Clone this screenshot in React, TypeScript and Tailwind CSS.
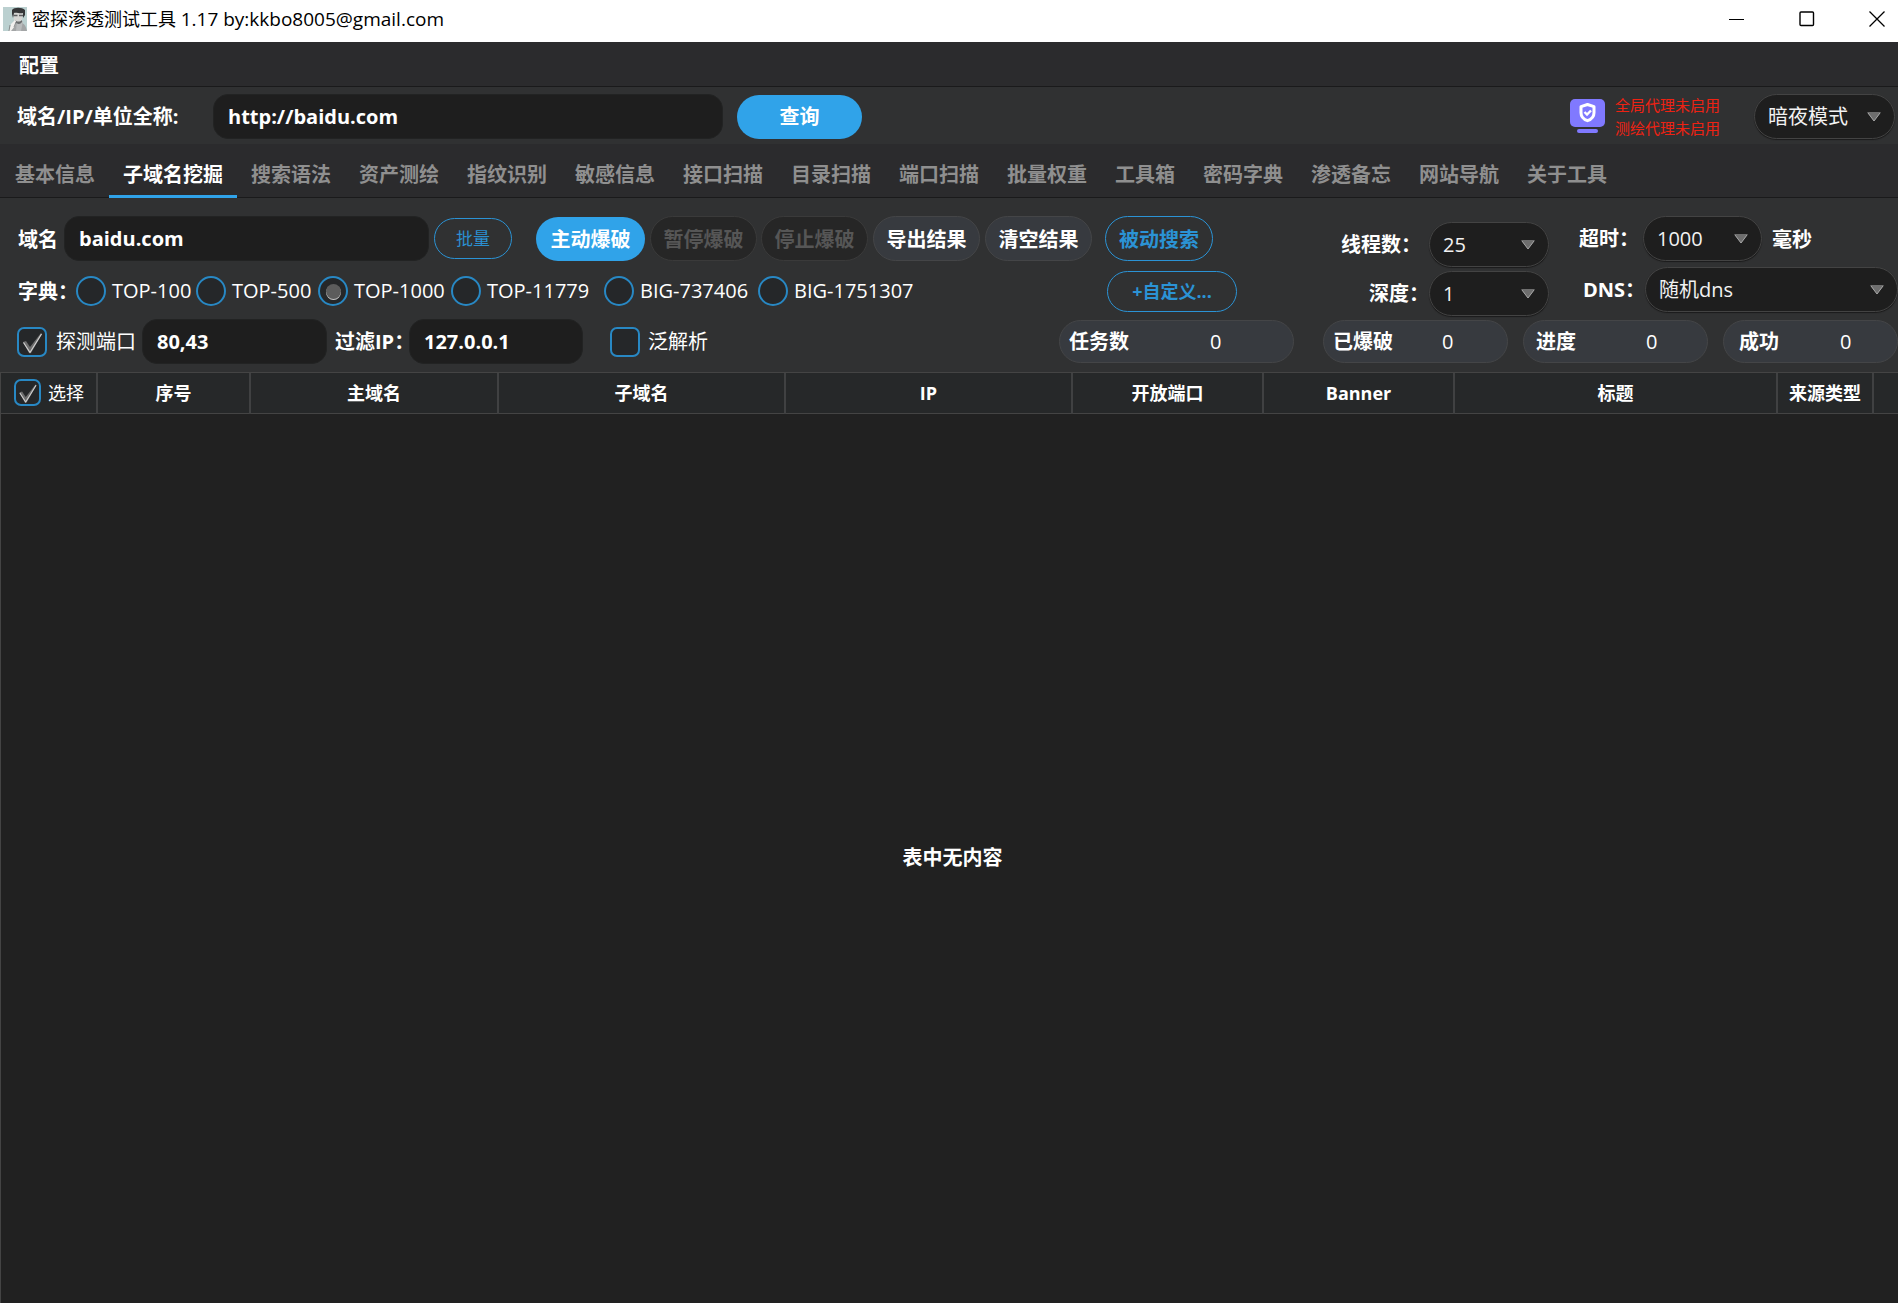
import React, { useState } from "react";

const TABS = [
  "基本信息", "子域名挖掘", "搜索语法", "资产测绘", "指纹识别", "敏感信息", "接口扫描", "目录扫描",
  "端口扫描", "批量权重", "工具箱", "密码字典", "渗透备忘", "网站导航", "关于工具",
];

const COLUMNS = [
  { name: "序号", width: "w-[153px]" },
  { name: "主域名", width: "w-[248px]" },
  { name: "子域名", width: "w-[287px]" },
  { name: "IP", width: "w-[287px]" },
  { name: "开放端口", width: "w-[191px]" },
  { name: "Banner", width: "w-[191px]" },
  { name: "标题", width: "" },
  { name: "来源类型", width: "w-[96px]" },
];

const DICTIONARIES = [
  { name: "TOP-100", width: "w-[120px]" },
  { name: "TOP-500", width: "w-[122px]" },
  { name: "TOP-1000", width: "w-[133px]" },
  { name: "TOP-11779", width: "w-[153px]" },
  { name: "BIG-737406", width: "w-[154px]" },
  { name: "BIG-1751307", width: "w-[166px]" },
];

const STATS = [
  { name: "任务数", width: "w-[235px]", margin: "mr-[29px]", pad: "pl-[9px]", gap: "ml-[81px]" },
  { name: "已爆破", width: "w-[185px]", margin: "mr-[15px]", pad: "pl-[9px]", gap: "ml-[49px]" },
  { name: "进度", width: "w-[185px]", margin: "mr-[15px]", pad: "pl-[12px]", gap: "ml-[70px]" },
  { name: "成功", width: "w-[175px]", margin: "", pad: "pl-[15px]", gap: "ml-[61px]" },
];

function Avatar() {
  return (
    <svg width="24" height="24" viewBox="0 0 24 24" aria-hidden="true">
      <rect width="24" height="24" fill="#bbd0d0" />
      <path d="M8 24c0-4 2-8 5-9h4c4 1 6 4 7 9z" fill="#a3a5a6" />
      <path d="M14 14l-1 10h5l2-10z" fill="#b9bbbc" />
      <path d="M10 5h10l-1 8c-1 3-6 4-8 0z" fill="#d5d5d3" />
      <path d="M9 7V3c2-3 10-3 13 0v5l-2 3V6c-3 1-7-1-9 0l-1 5z" fill="#353638" />
      <path d="M10.500 8.500h4M16 8.500h4" stroke="#5c5d5f" strokeWidth="1.500" />
      <path d="M12 13c2 2 5 2 7 0v2c-2 3-5 2-7 0z" fill="#686a6b" />
      <path d="M6 24l2-7 4-4 1 1-1 5-4 5z" fill="#f3f1ef" />
      <path d="M7 18l-1 6M13 15l-2 5" stroke="#77797a" strokeWidth="0.800" />
    </svg>
  );
}

function ProxyIcon() {
  return (
    <svg width="35" height="35" viewBox="0 0 35 35" aria-hidden="true">
      <rect width="35" height="28" rx="5" fill="#8079ff" />
      <rect x="7" y="30" width="21" height="4" rx="2" fill="#8079ff" />
      <path d="M17.500 5.500l6.500 2.200v6c0 4-2.500 6.500-6.500 8-4-1.500-6.500-4-6.500-8v-6z" fill="none" stroke="#fff" strokeWidth="3" strokeLinejoin="round" />
      <path d="M14.500 13l2.500 2.500 4-4" fill="none" stroke="#fff" strokeWidth="2.400" />
    </svg>
  );
}

function Arrow({ className }: { className: string }) {
  return (
    <svg className={"pointer-events-none absolute top-1/2 -translate-y-1/2 " + className} width="14" height="10" viewBox="0 0 14 10" aria-hidden="true">
      <path d="M0 0h14L7 9z" fill="#6e6e6e" />
      <path d="M1 1l6 8 6-8" fill="none" stroke="#a8a8a8" />
    </svg>
  );
}

function Select({ id, label, value, width }: { id: string; label?: string; value: string; width: string }) {
  return (
    <div className={"relative h-[45px] shrink-0 font-normal " + width}>
      <select
        id={id}
        aria-label={label}
        defaultValue={value}
        className="h-full w-full appearance-none rounded-full border border-[#434343] bg-[#1e1e1e] pl-[13px] text-[20px] text-[#f2f2f2] shadow-[0_1px_1px_#1b1b1b]"
      >
        <option>{value}</option>
      </select>
      <Arrow className="right-[14px]" />
    </div>
  );
}

function Check({ id, size, checked }: { id: string; size: string; checked?: boolean }) {
  return (
    <span className={"relative block shrink-0 " + size}>
      <input
        id={id}
        type="checkbox"
        defaultChecked={checked}
        className="peer block h-full w-full appearance-none rounded-[7px] border-2 border-[#2888c4] bg-[#252729]"
      />
      <svg className="pointer-events-none absolute inset-0 hidden h-full w-full peer-checked:block" viewBox="0 0 30 30" aria-hidden="true">
        <path d="M6 15l3-1 4 6L24 6l1 1-11 19h-2z" fill="#6d6d6d" />
        <path d="M6.500 15.500L13 25.500 24.500 7" fill="none" stroke="#d0d0d0" strokeWidth="1.200" />
      </svg>
    </span>
  );
}

const pill = "h-[45px] shrink-0 rounded-full border pt-[2px] text-[20px] font-bold";
const field = "h-[45px] shrink-0 rounded-[15px] border border-[#222323] bg-[#1e1e1e] px-[14px] text-[20px] font-bold text-white outline-none";

export default function App() {
  const [tab, setTab] = useState("子域名挖掘");
  return (
    <div className="flex min-h-screen flex-col overflow-hidden whitespace-nowrap bg-[#303132] font-['Open_Sans','Noto_Sans_CJK_SC',sans-serif] text-[20px] leading-[28px] text-white">
      <header className="flex h-[42px] items-center bg-white pb-[4px] pl-[3px] pr-[13px] text-[18px] text-black">
        <Avatar />
        <h1 className="ml-[5px]">密探渗透测试工具 <span className="text-[19px]">1.17 by:kkbo8005@gmail.com</span></h1>
        <div className="ml-auto flex items-center gap-[54px]">
          <button aria-label="最小化">
            <svg width="16" height="16" viewBox="0 0 16 16"><path d="M0 8.500h15" stroke="#000" /></svg>
          </button>
          <button aria-label="最大化">
            <svg width="16" height="16" viewBox="0 0 16 16"><rect x="1" y="1" width="13.500" height="13.500" rx="1" fill="none" stroke="#000" strokeWidth="1.400" /></svg>
          </button>
          <button aria-label="关闭">
            <svg width="16" height="16" viewBox="0 0 16 16"><path d="M.5.5l15 15M15.500.5l-15 15" stroke="#000" strokeWidth="1.300" /></svg>
          </button>
        </div>
      </header>

      <nav className="flex h-[45px] items-center border-b border-[#1a1a1b] bg-[#2b2b2d] pl-[19px] pt-[4px]">
        <button className="font-bold">配置</button>
      </nav>

      <section className="flex h-[57px] items-center pl-[17px] pr-[3px] pt-[2px]">
        <label htmlFor="target" className="w-[196px] font-bold">域名/IP/单位全称:</label>
        <input id="target" defaultValue="http://baidu.com" className={field + " w-[510px]"} />
        <button className="ml-[14px] h-[44px] w-[125px] rounded-full bg-[#30a3e9] font-bold">查询</button>
        <div className="ml-auto flex items-center">
          <ProxyIcon />
          <div className="ml-[10px] text-[15px] leading-[23px] text-[#ee2213]">
            <p>全局代理未启用</p>
            <p>测绘代理未启用</p>
          </div>
          <div className="ml-[34px]">
            <Select id="theme" label="主题" value="暗夜模式" width="w-[141px]" />
          </div>
        </div>
      </section>

      <div role="tablist" className="flex h-[54px] border-b border-[#1a1a1b] bg-[#2b2b2d] pl-px">
        {TABS.map((name) => (
          <button
            key={name}
            role="tab"
            aria-selected={name === tab}
            onClick={() => setTab(name)}
            className="-mb-px border-b-[3px] border-transparent px-[14px] pt-[11px] font-bold text-[#8f8f8f] aria-selected:border-[#30a3e9] aria-selected:text-white"
          >
            {name}
          </button>
        ))}
      </div>

      <main className="flex flex-1 flex-col">
        <div className="flex items-start pt-[18px]">
          <div className="flex flex-col gap-[9px] pl-[18px]">
            <div className="flex items-center">
              <label htmlFor="domain" className="w-[46px] pt-[2px] font-bold">域名</label>
              <input id="domain" defaultValue="baidu.com" className={field + " w-[365px]"} />
              <button className="ml-[5px] h-[41px] w-[78px] rounded-full border border-[#2b93d5] text-[17px] text-[#2b8fd0]">批量</button>
              <button className="ml-[24px] h-[44px] w-[109px] rounded-full bg-[#30a3e9] pt-[2px] font-bold">主动爆破</button>
              <button disabled className={pill + " ml-[5px] w-[107px] border-[#3a3a3a] bg-[#262626] text-[#565656]"}>暂停爆破</button>
              <button disabled className={pill + " ml-[4px] w-[107px] border-[#3a3a3a] bg-[#262626] text-[#565656]"}>停止爆破</button>
              <button className={pill + " ml-[5px] w-[107px] border-[#444547] bg-[#373a3f]"}>导出结果</button>
              <button className={pill + " ml-[5px] w-[107px] border-[#444547] bg-[#373a3f]"}>清空结果</button>
              <button className={pill + " ml-[13px] w-[108px] border-[#2b93d5] text-[#2b93d5]"}>被动搜索</button>
            </div>
            <div className="flex h-[42px] items-center">
              <span id="dict" className="w-[58px] pt-[2px] font-bold">字典：</span>
              <div role="radiogroup" aria-labelledby="dict" className="flex">
                {DICTIONARIES.map((d) => (
                  <label key={d.name} className={"flex items-center gap-[6px] text-[20px] " + d.width}>
                    <input
                      type="radio"
                      name="dict"
                      defaultChecked={d.name === "TOP-1000"}
                      className="grid size-[30px] shrink-0 appearance-none place-items-center rounded-full border-2 border-[#2888c4] bg-[#252729] checked:before:size-[15px] checked:before:rounded-full checked:before:bg-[#5c5c5c] checked:before:shadow-[0_1px_0_#c8c8c8] checked:before:content-['']"
                    />
                    {d.name}
                  </label>
                ))}
              </div>
              <button className="ml-auto mr-[-24px] h-[41px] w-[130px] rounded-full border border-[#2b93d5] text-[18px] font-bold text-[#2b93d5]">+自定义...</button>
            </div>
          </div>

          <div className="ml-auto flex font-bold">
            <div className="flex flex-col gap-[4px] pt-[6px]">
              <div className="flex items-center justify-end">
                <label htmlFor="threads" className="w-[88px]">线程数：</label>
                <Select id="threads" value="25" width="w-[120px]" />
              </div>
              <div className="flex items-center justify-end">
                <label htmlFor="depth" className="w-[60px]">深度：</label>
                <Select id="depth" value="1" width="w-[120px]" />
              </div>
            </div>
            <div className="ml-[30px] flex flex-col gap-[6px]">
              <div className="flex items-center">
                <label htmlFor="timeout" className="w-[64px]">超时：</label>
                <Select id="timeout" value="1000" width="w-[119px]" />
                <span className="ml-[10px] pt-[2px]">毫秒</span>
              </div>
              <div className="flex items-center pl-[4px]">
                <label htmlFor="dns" className="w-[62px]">DNS：</label>
                <Select id="dns" value="随机dns" width="w-[253px]" />
              </div>
            </div>
          </div>
        </div>

        <div className="flex items-center pb-[8px] pl-[17px] pt-[3px]">
          <Check id="probe" size="size-[30px]" checked />
          <label htmlFor="probe" className="ml-[9px] w-[86px]">探测端口</label>
          <input aria-label="端口" defaultValue="80,43" className={field + " w-[185px]"} />
          <label htmlFor="filter" className="ml-[8px] w-[74px] font-bold">过滤IP：</label>
          <input id="filter" defaultValue="127.0.0.1" className={field + " w-[174px]"} />
          <span className="ml-[27px]"><Check id="wild" size="size-[30px]" /></span>
          <label htmlFor="wild" className="ml-[8px]">泛解析</label>
          <div className="ml-auto flex">
            {STATS.map((s) => (
              <div key={s.name} className={"flex h-[43px] items-center rounded-full border border-[#444547] bg-[#373a3f] " + s.width + " " + s.margin + " " + s.pad}>
                <span className="font-bold">{s.name}</span>
                <span className={s.gap}>0</span>
              </div>
            ))}
          </div>
        </div>

        <div className="flex flex-1 flex-col border-l border-t border-[#444444] bg-[#212121]">
          <table className="w-full table-fixed border-collapse text-[18px]">
            <thead>
              <tr className="h-[40px] border-b border-[#444444] bg-[#262829]">
                <th className="w-[96px] border-r-2 border-[#404142] p-0 font-normal">
                  <span className="flex items-center gap-[7px] pl-[13px]">
                    <Check id="all" size="size-[27px]" checked />
                    <label htmlFor="all">选择</label>
                  </span>
                </th>
                {COLUMNS.map((c) => (
                  <th key={c.name} className={"border-r-2 border-[#404142] font-bold " + c.width}>{c.name}</th>
                ))}
                <th className="w-[25px]" aria-label="更多" />
              </tr>
            </thead>
          </table>
          <p className="grid flex-1 place-items-center pl-[6px] font-bold">表中无内容</p>
        </div>
      </main>
    </div>
  );
}
